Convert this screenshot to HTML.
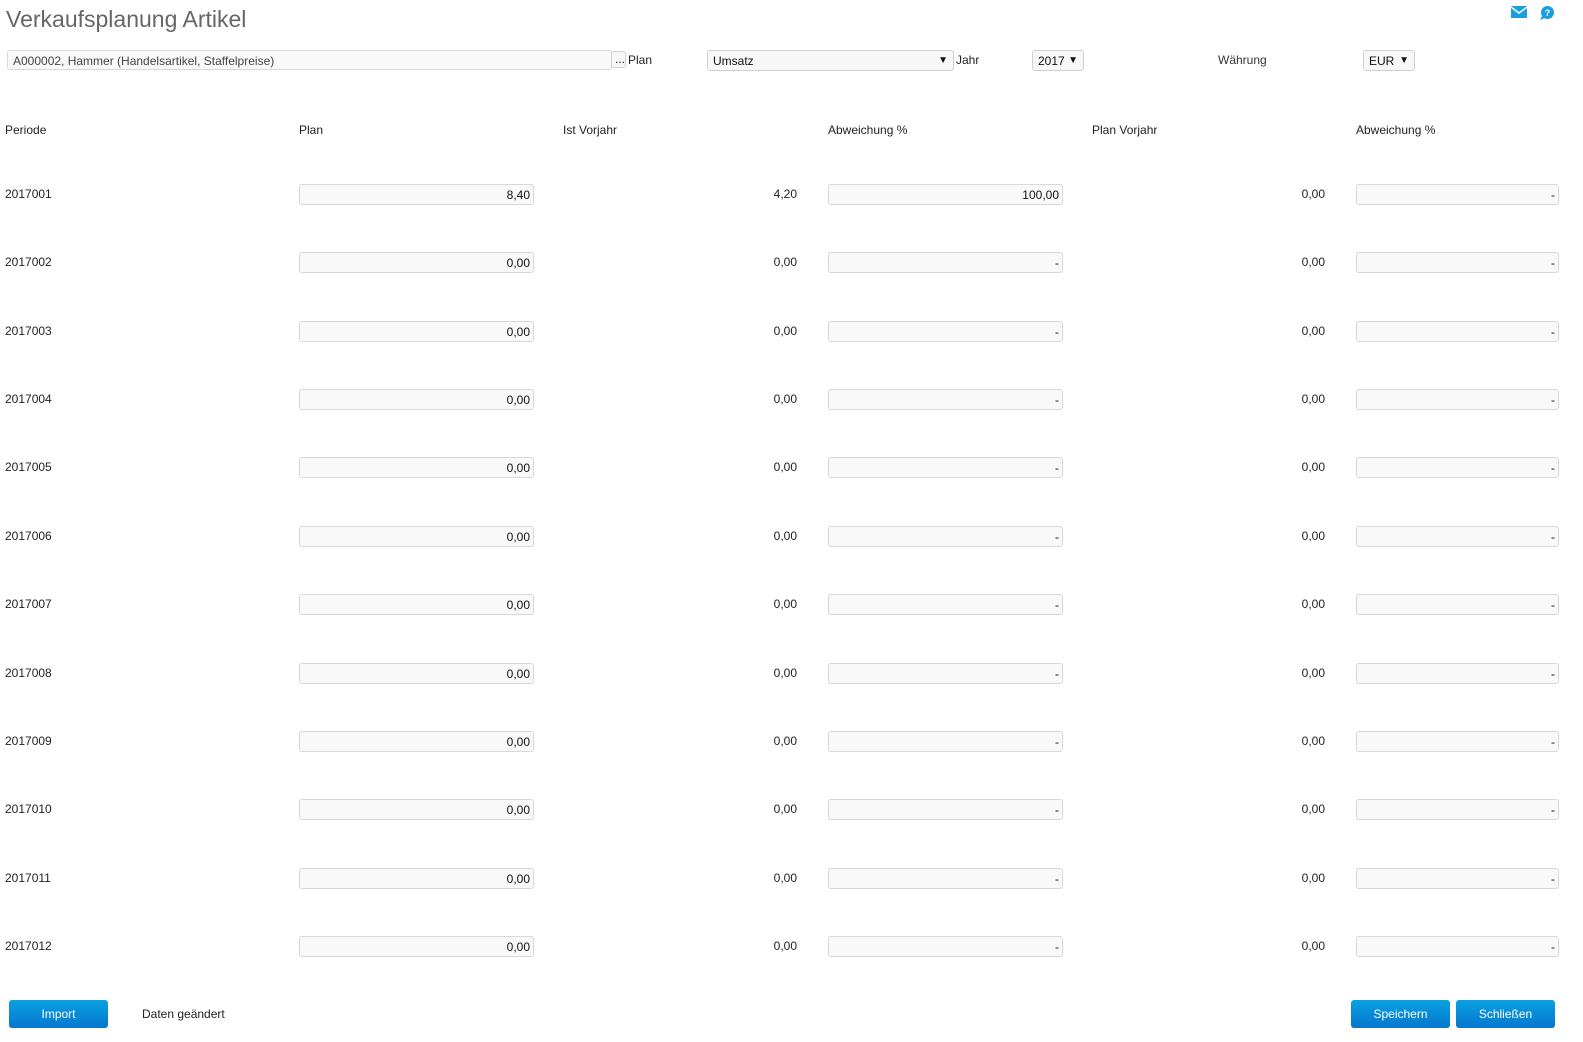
<!DOCTYPE html>
<html style="overflow:hidden"><head><meta charset="utf-8"><style>
*{box-sizing:border-box}
body{margin:0;width:1583px;height:1042px;background:#fff;font-family:"Liberation Sans",Arial,sans-serif;font-size:12px;color:#222;position:relative;overflow:hidden}
.a{position:absolute;white-space:nowrap}
.in{position:absolute;height:21px;border:1px solid #d8d8d8;border-radius:3px;background:#f9f9f9;text-align:right;padding:3px 3px 0 0;font-size:12px;color:#111}
.sel{position:absolute;height:21px;border:1px solid #d0d0d0;border-radius:3px;background:#f7f7f7;padding:3px 5px 0;font-size:12px;color:#111}
.sel span{position:absolute;right:5px;top:4px;font-size:10px}
.r{text-align:right}
.btn{position:absolute;height:28px;width:99px;border-radius:3px;background:linear-gradient(#0aa0e0,#0477cf);color:#fff;text-align:center;line-height:28px;font-size:12px}
</style></head><body>
<div class="a" style="left:6px;top:6px;font-size:23px;color:#666">Verkaufsplanung Artikel</div>
<svg class="a" style="left:1511px;top:6px" width="16" height="13" viewBox="0 0 16 13"><rect x="0" y="0" width="16" height="12" fill="#1a9ee0"/><path d="M0 1 L8 7 L16 1" stroke="#fff" stroke-width="1.5" fill="none"/></svg>
<svg class="a" style="left:1539px;top:5px" width="16" height="16" viewBox="0 0 16 16"><circle cx="8.5" cy="7.5" r="6.5" fill="#1a9ee0"/><path d="M3 11 L1 15 L6 13z" fill="#1a9ee0"/><text x="8.5" y="11" font-size="9" font-weight="bold" fill="#fff" text-anchor="middle" font-family="Liberation Sans">?</text></svg>
<div class="in" style="left:7px;top:50px;width:605px;height:20px;text-align:left;padding-left:5px;color:#444">A000002, Hammer (Handelsartikel, Staffelpreise)</div>
<div class="sel" style="left:611px;top:51px;width:15px;height:17px;padding:0 0 0 3px;line-height:14px">...</div>
<div class="a" style="left:628px;top:53px">Plan</div>
<div class="sel" style="left:707px;top:50px;width:247px">Umsatz<span>▼</span></div>
<div class="a" style="left:956px;top:53px">Jahr</div>
<div class="sel" style="left:1032px;top:50px;width:52px">2017<span>▼</span></div>
<div class="a" style="left:1218px;top:53px;color:#333">Währung</div>
<div class="sel" style="left:1363px;top:50px;width:52px">EUR<span>▼</span></div>
<div class="a" style="left:5px;top:123px">Periode</div>
<div class="a" style="left:299px;top:123px">Plan</div>
<div class="a" style="left:563px;top:123px">Ist Vorjahr</div>
<div class="a" style="left:828px;top:123px">Abweichung %</div>
<div class="a" style="left:1092px;top:123px">Plan Vorjahr</div>
<div class="a" style="left:1356px;top:123px">Abweichung %</div>
<div id="rows"></div>
<script>
var h='';
for(var i=0;i<12;i++){var y=Math.round(184+68.36*i);var p='2017'+String(i+1).padStart(3,'0');
h+='<div class="a" style="left:5px;top:'+(y+3)+'px">'+p+'</div>';
h+='<div class="in" style="left:299px;top:'+y+'px;width:235px">'+(i?'0,00':'8,40')+'</div>';
h+='<div class="a r" style="left:700px;width:97px;top:'+(y+3)+'px">'+(i?'0,00':'4,20')+'</div>';
h+='<div class="in" style="left:828px;top:'+y+'px;width:235px">'+(i?'-':'100,00')+'</div>';
h+='<div class="a r" style="left:1228px;width:97px;top:'+(y+3)+'px">0,00</div>';
h+='<div class="in" style="left:1356px;top:'+y+'px;width:203px">-</div>';}
document.getElementById('rows').innerHTML=h;
</script>
<div class="btn" style="left:9px;top:1000px">Import</div>
<div class="a" style="left:142px;top:1007px">Daten geändert</div>
<div class="btn" style="left:1351px;top:1000px">Speichern</div>
<div class="btn" style="left:1456px;top:1000px">Schließen</div>
</body></html>
